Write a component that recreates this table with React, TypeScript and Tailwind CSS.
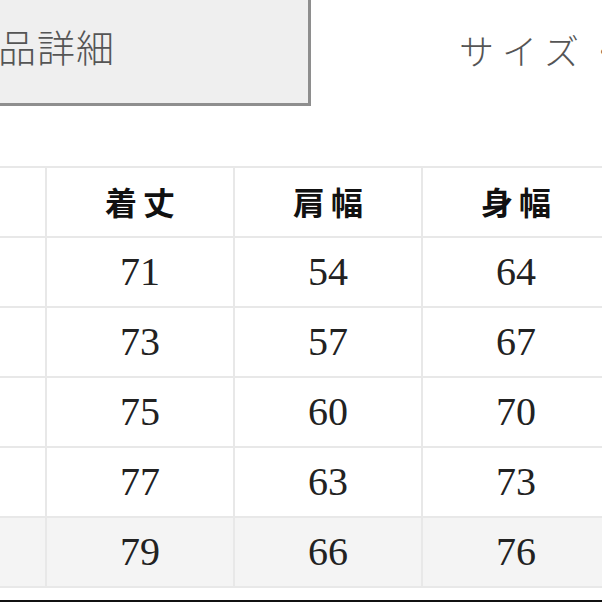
import React from "react";

const rows = [
  [71, 54, 64],
  [73, 57, 67],
  [75, 60, 70],
  [77, 63, 73],
  [79, 66, 76],
];

export default function App() {
  const jp = { fontFamily: '"Noto Sans CJK JP", "Noto Sans", sans-serif' };
  return (
    <div className="relative w-[602px] h-[602px] overflow-hidden bg-white flex flex-col">
      <div className="flex h-[166px] shrink-0">
        <div className="w-[311px] h-[106px] shrink-0 bg-[#efefef] border-r-[3px] border-b-[3px] border-[#8e8e8e] overflow-hidden">
          <div
            className="ml-[-41px] mt-[22px] text-[38px] leading-[48px] text-[#555] font-light whitespace-nowrap tracking-[1px]"
            style={jp}
          >
            商品詳細
          </div>
        </div>
        <div
          className="ml-[148px] mt-[26px] text-[35px] leading-[48px] text-[#555] font-light whitespace-nowrap tracking-[8px]"
          style={jp}
        >
          サイズ・
        </div>
      </div>
      <div className="ml-[-143px] w-[760px] grid grid-cols-[186px_186px_186px_186px] gap-[2px] p-[2px] bg-[#e8e8e8] shrink-0">
        <div className="h-[68px] bg-white" />
        {["着丈", "肩幅", "身幅"].map((h) => (
          <div
            key={h}
            className="h-[68px] bg-white flex items-center justify-center pb-[2px] text-[32px] font-bold text-[#111] tracking-[6px] pl-[6px]"
            style={jp}
          >
            {h}
          </div>
        ))}
        {rows.map((r, i) => {
          const bg = i === rows.length - 1 ? "bg-[#f4f4f4]" : "bg-white";
          return (
            <React.Fragment key={i}>
              <div className={`h-[68px] ${bg}`} />
              {r.map((v, j) => (
                <div
                  key={j}
                  className={`h-[68px] ${bg} flex items-center justify-center text-[40px] text-[#222]`}
                  style={{ fontFamily: '"Liberation Serif", serif' }}
                >
                  {v}
                </div>
              ))}
            </React.Fragment>
          );
        })}
      </div>
      <div className="flex-1" />
      <div className="h-[2px] bg-[#111] shrink-0" />
    </div>
  );
}
